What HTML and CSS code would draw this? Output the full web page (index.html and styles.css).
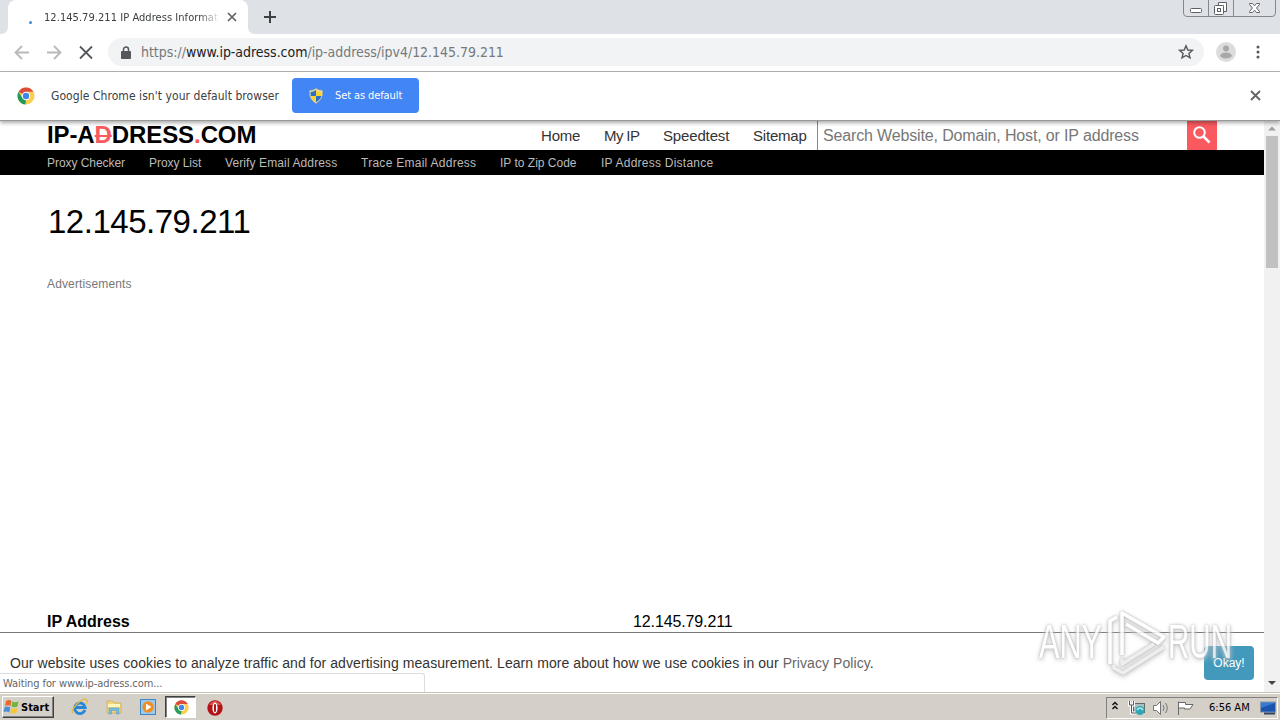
FILE: index.html
```html
<!DOCTYPE html>
<html lang="en">
<head>
<meta charset="utf-8">
<title>12.145.79.211 IP Address Information</title>
<link rel="stylesheet" href="styles.css">
</head>
<body>
<svg width="0" height="0" class="defs">
  <symbol id="chrome" viewBox="0 0 18 18">
    <circle cx="9" cy="9" r="8.500" fill="#fbcf4e"/>
    <path d="M9 9 1.600 4.700A8.500 8.500 0 0 1 16.400 4.800H9Z" fill="#dd4b3e"/>
    <path d="M1.600 4.800 5.300 11 9 13 8.400 17.500A8.500 8.500 0 0 1 1.600 4.800Z" fill="#229a5b"/>
    <circle cx="9" cy="9" r="4.200" fill="#fff"/><circle cx="9" cy="9" r="3.200" fill="#4285e8"/>
  </symbol>
</svg>
<div class="screen">
  <div class="tabstrip">
    <div class="edge"></div>
    <div class="tab">
      <i class="spinner"></i>
      <span class="tab-title"><span class="t-tab">12.145.79.211 IP Address Informati</span></span>
      <svg class="tab-close" width="10" height="10" viewBox="0 0 10 10"><path d="M1 1l8 8M9 1l-8 8" stroke="#5f6368" stroke-width="1.700"/></svg>
    </div>
    <svg class="newtab" width="36" height="34" viewBox="0 0 36 34"><path d="M0 27Q0 34 7 34H0Z" fill="#fff"/><path d="M22 11v12M16 17h12" stroke="#3c4043" stroke-width="2"/></svg>
    <svg class="winbtns" width="98" height="18" viewBox="0 0 98 18">
      <path d="M1.500 0V13Q1.500 16.500 5 16.500H90Q93.500 16.500 93.500 13V0M26.500 0V16M51.500 0V16" fill="none" stroke="#85888f"/>
      <rect x="8.500" y="8.500" width="11" height="4" rx="1" fill="#fff" stroke="#5d6066"/>
      <path d="M36.500 2.500H44.500V11.500H41.500V5.500H36.500Z" fill="#fff" stroke="#5d6066"/><rect x="32.500" y="5.500" width="9" height="9" rx="1" fill="#fff" stroke="#5d6066"/><rect x="35.500" y="8.500" width="3" height="3" fill="#fff" stroke="#5d6066"/>
      <path d="M67.500 3.500H70.500L72.500 5.800 74.500 3.500H77.500V4.500L74.500 8 77.500 11.500V12.500H74.500L72.500 10.200 70.500 12.500H67.500V11.500L70.500 8 67.500 4.500Z" fill="#fff" stroke="#5d6066"/>
    </svg>
  </div>

  <div class="toolbar">
    <svg width="96" height="37" viewBox="0 0 96 37" fill="none" stroke-width="1.800">
      <path d="M29 18.500H16M22 12 15.500 18.500 22 25M47 18.500H60M54 12 60.500 18.500 54 25" stroke="#b7b9bb"/>
      <path d="M80 12.500l12 12M92 12.500l-12 12" stroke="#54585c"/>
    </svg>
    <div class="omnibox">
      <svg width="10" height="13" viewBox="0 0 10 13"><rect x="0" y="5" width="10" height="8" rx="1" fill="#54585c"/><path d="M2.500 5.500V3.500a2.500 2.500 0 0 1 5 0v2" fill="none" stroke="#54585c" stroke-width="1.500"/></svg>
      <span class="url">https://<b>www.ip-adress.com</b>/ip-address/ipv4/12.145.79.211</span>
      <svg class="star" width="16" height="16" viewBox="0 0 16 16"><path d="M8 1.800 9.800 6l4.600.4-3.500 3 1.100 4.500L8 11.500l-4 2.400 1.100-4.500-3.500-3L6.200 6Z" fill="none" stroke="#54585c" stroke-width="1.400"/></svg>
    </div>
    <svg width="20" height="20" viewBox="0 0 20 20"><circle cx="10" cy="10" r="10" fill="#dcdcdc"/><circle cx="10" cy="6.500" r="3" fill="#a8a8a8"/><ellipse cx="10" cy="13.500" rx="5.800" ry="3" fill="#a8a8a8"/></svg>
    <svg class="dots" width="4" height="14" viewBox="0 0 4 14" fill="#54585c"><circle cx="2" cy="2" r="1.500"/><circle cx="2" cy="7" r="1.500"/><circle cx="2" cy="12" r="1.500"/></svg>
  </div>

  <div class="infobar">
    <svg width="18" height="18"><use href="#chrome"/></svg>
    <span class="info-text">Google Chrome isn't your default browser</span>
    <div class="default-btn">
      <svg width="16" height="16" viewBox="0 0 16 16"><path d="M8 .5Q11 2.500 14.500 2.500 15.500 11 8 15.500.5 11 1.500 2.500 5 2.500 8 .5Z" fill="#e8e2bb" stroke="#a9a68c" stroke-width=".6"/><path d="M8 2V8H2.700L2.500 4Q5.500 3.800 8 2ZM8 8H13.300Q12.300 12 8 14.300Z" fill="#2c6fc4"/><path d="M8 2Q10.500 3.800 13.500 4L13.300 8H8ZM8 8H2.700Q3.700 12 8 14.300Z" fill="#fbd22f"/></svg>
      <span>Set as default</span>
    </div>
    <svg class="info-close" width="11" height="11" viewBox="0 0 11 11"><path d="M1 1l9 9M10 1l-9 9" stroke="#666" stroke-width="1.900"/></svg>
  </div>

  <div class="view">
    <main class="page">
      <header class="head">
        <div class="logo">IP-A<s>D</s>DRESS<em>.</em>COM</div>
        <nav class="menu"><a class="m1">Home</a><a class="m2">My IP</a><a class="m3">Speedtest</a><a class="m4">Sitemap</a></nav>
        <div class="search"><span>Search Website, Domain, Host, or IP address</span></div>
        <div class="go"><svg width="30" height="29" viewBox="0 0 30 29"><circle cx="12.500" cy="11.500" r="5.300" fill="none" stroke="#fff" stroke-width="2"/><path d="M16.500 15.500l6 6" stroke="#fff" stroke-width="2.500"/></svg></div>
      </header>
      <nav class="subnav"><a class="s1">Proxy Checker</a><a class="s2">Proxy List</a><a class="s3">Verify Email Address</a><a class="s4">Trace Email Address</a><a class="s5">IP to Zip Code</a><a class="s6">IP Address Distance</a></nav>
      <h1>12.145.79.211</h1>
      <div class="ads"><span>Advertisements</span></div>
      <div class="row"><b>IP Address</b><span>12.145.79.211</span></div>
      <div class="cookie">
        <p>Our website uses cookies to analyze traffic and for advertising measurement. Learn more about how we use cookies in our <a>Privacy Policy</a>.</p>
        <div class="okay"><span>Okay!</span></div>
      </div>
    </main>
    <div class="scroll">
      <svg width="16" height="15" viewBox="0 0 16 15"><path d="M4 9.500 8 5.500l4 4Z" fill="#a0a0a0"/></svg>
      <i></i>
      <svg class="down" width="16" height="17" viewBox="0 0 16 17"><path d="M4 6 8 10l4-4Z" fill="#444"/></svg>
    </div>
    <div class="status"><span>Waiting for www.ip-adress.com...</span></div>
    <svg class="watermark" width="210" height="90" viewBox="0 0 210 90">
      <g fill="none" stroke-width="3.500" stroke-linejoin="round">
        <path d="M84 65V68L93 73 134 47M92 59V64L124 44" stroke="#ececec"/>
        <path d="M80 64V21L87 17M92 55V13L134 37 128 43 96 24" stroke="#fff"/>
      </g>
      <text x="9" y="58" textLength="63" lengthAdjust="spacingAndGlyphs">ANY</text><text x="138" y="58" textLength="64" lengthAdjust="spacingAndGlyphs">RUN</text>
    </svg>
  </div>

  <div class="taskbar">
    <div class="start"><svg width="17" height="16" viewBox="0 0 17 16"><path d="M3 2Q6 0 8.500 2L7.500 7Q5 5.500 2 7Z" fill="#e66a2c"/><path d="M9.500 2.500Q12 4 15.500 2.500L14.500 7.500Q11.500 9 8.500 7.500Z" fill="#72b43c"/><path d="M1.700 8Q4.500 6.700 7.300 8.500L6.300 13.500Q3.500 12 .5 13Z" fill="#498fd3"/><path d="M8.300 9Q11 10.500 14.300 9L13.300 14Q10 15 7.300 13.800Z" fill="#f6c633"/></svg><span>Start</span></div>
    <div class="launch">
      <svg width="18" height="18" viewBox="0 0 18 18"><path d="M14 12A5.300 5.300 0 1 1 14.200 9.500H5" fill="none" stroke="#2687d8" stroke-width="2.800"/><path d="M2 15Q-1 13 6 6T16 2Q17 3 15 6" fill="none" stroke="#e9b83b" stroke-width="1.200"/></svg>
      <svg width="18" height="18" viewBox="0 0 18 18"><path d="M2 3H8L9 5H16V15H2Z" fill="#f2d675" stroke="#c9ab50" stroke-width=".7"/><path d="M3 6H15V9H3Z" fill="#fff5be"/><path d="M4 16V10H14V16H11.500V12.500H6.500V16Z" fill="#74bfe3" stroke="#4a91bd" stroke-width=".5"/></svg>
      <svg width="18" height="18" viewBox="0 0 18 18"><rect x="1.500" y="1.500" width="15" height="15" fill="#9bc9ef" stroke="#3f86c4"/><circle cx="9" cy="9" r="5.700" fill="#f28c1b"/><path d="M7 5.500V12.500L12.500 9Z" fill="#fff"/></svg>
    </div>
    <div class="active"><svg width="15" height="15"><use href="#chrome"/></svg></div>
    <svg class="opera" width="16" height="16" viewBox="0 0 16 16"><circle cx="8" cy="8" r="7.700" fill="#b41217"/><path d="M2 5Q8-3 14 5" fill="#db5550"/><ellipse cx="8" cy="8" rx="2.600" ry="5.400" fill="#fff"/><rect x="7" y="4" width="2" height="8" rx="1" fill="#b41217"/></svg>
    <div class="tray">
      <svg width="82" height="20" viewBox="0 0 82 20">
        <path d="M5.500 7 8 4.500 10.500 7M5.500 11 8 8.500 10.500 11" fill="none" stroke="#111" stroke-width="1.500"/>
        <rect x="26.500" y="5.500" width="11" height="9" fill="#aebfc2" stroke="#62696b"/><path d="M22.500 3V7H26.500V3M24.500 7V15H29" fill="none" stroke="#fff" stroke-width="3"/><path d="M22.500 3V7H26.500V3M24.500 7V15H29" fill="none" stroke="#555"/><circle cx="33" cy="12.500" r="4.500" fill="#31a6b4"/><path d="M30 12Q33 8 36 12" fill="none" stroke="#a6eff1" stroke-width="1.500"/>
        <path d="M46.500 7.500H49.500L53.500 3.500V16.500L49.500 12.500H46.500Z" fill="#fff" stroke="#747474"/><path d="M56 7Q58 10 56 13M58.500 5Q62 10 58.500 15" fill="none" stroke="#777"/>
        <path d="M71.500 17V3.500M71.500 4.500H78.500V6.500H86L83 11H77.500V10H71.500" fill="#fff" stroke="#696969"/>
      </svg>
      <span class="clock">6:56 AM</span>
      <svg width="16" height="16" viewBox="0 0 16 16"><rect x=".5" y="2" width="15" height="10" fill="#3978d5" stroke="#8696aa"/><path d="M1 8 15 3V11.500H1Z" fill="#1b54ad"/><path d="M4 13.500H15" stroke="#30445f" stroke-width="2"/></svg>
    </div>
  </div>
</div>
</body>
</html>
```
FILE: styles.css
```css
*{box-sizing:border-box}
body{margin:0;overflow:hidden;font-family:"Liberation Sans",sans-serif;color:#000}
svg{display:block;flex:none;overflow:visible}
.defs{position:absolute}
.screen{width:1280px;height:720px;display:flex;flex-direction:column;background:#fff;white-space:nowrap}
.screen>*{flex:none}
.tabstrip,.toolbar,.infobar,.status,.taskbar{font-family:"DejaVu Sans Condensed","DejaVu Sans",sans-serif}
.tabstrip{height:34px;background:#dee1e6;display:flex}
.edge{width:8px;background:#dee1e6;border-bottom-right-radius:7px;box-shadow:0 8px 0 #fff}
.tab{width:240px;background:#fff;border-radius:8px 8px 0 0;display:flex;align-items:center;padding-left:21px}
.spinner{width:3px;height:3px;background:#3c8ad8;border-radius:2px;margin:10px 12px 0 0}
.tab-title{width:174px;font-size:11px;color:#3c4043;-webkit-mask-image:linear-gradient(90deg,#000 155px,transparent 176px)}
.t-tab{letter-spacing:.05px}
.tab-close{margin-left:9px}
.winbtns{margin-left:auto}
.toolbar{height:38px;border-bottom:1px solid #b5b5b5;display:flex;align-items:center;padding-bottom:1px}
.omnibox{width:1096px;height:28px;border-radius:14px;background:#f1f3f4;margin:0 12px;display:flex;align-items:center;padding:0 10px 0 13px}
.url{margin-left:10px;font-size:14px;line-height:18px;color:#75797d;letter-spacing:-.03px}
.url b{font-weight:400;color:#202124}
.star{margin-left:auto}
.dots{margin-left:20px}
.infobar{height:49px;border-bottom:1px solid #999;display:flex;align-items:center;padding:0 0 1px 17px;box-shadow:0 2px 4px #0005;z-index:2;position:relative;background:#fff}
.info-text{width:241px;margin-left:16px;font-size:12px;color:#3c4043;letter-spacing:.06px}
.default-btn{width:127px;height:35px;border-radius:4px;background:#4285f4;color:#fff;display:flex;align-items:center;padding-left:16px;gap:11px;font-size:11px;letter-spacing:-.1px}
.info-close{margin:0 19px 0 auto}
.view{height:571px;display:flex;position:relative}
.page{width:1264px;display:flex;flex-direction:column}
.head{height:29px;display:flex;align-items:center;padding-left:47px}
.logo{width:494px;font-size:24px;font-weight:700;line-height:28px;margin-top:-2px;letter-spacing:-.1px}
.logo s,.logo em{color:#f95a5f;font-style:normal;text-decoration-thickness:2px}
.menu{width:276px;display:flex;font-size:15px;color:#333;margin-top:-1px}
.m1{width:63px;letter-spacing:-.2px}
.m2{width:59px;letter-spacing:-.6px}
.m3{width:90px;letter-spacing:-.15px}
.m4{letter-spacing:-.2px}
.search{width:370px;height:29px;border-left:1px solid #888;padding:5px 0 0 5px;font-size:16px;line-height:20px;color:#777;letter-spacing:-.15px}
.go{width:30px;height:29px;background:#fa5a5f}
.subnav{height:25px;background:#000;color:#bbb;display:flex;padding-left:47px;font-size:12px;line-height:26px}
.s1{width:102px;letter-spacing:-.05px}
.s2{width:76px;letter-spacing:-.05px}
.s3{width:136px;letter-spacing:.11px}
.s4{width:139px;letter-spacing:.27px}
.s5{width:101px}
.s6{letter-spacing:.24px}
h1{margin:27px 0 0 48px;height:40px;font-size:33px;line-height:40px;font-weight:400;letter-spacing:-.48px}
.ads{height:366px;padding:34px 0 0 47px;font-size:12px;line-height:16px;color:#777;letter-spacing:.14px}
.row{height:24px;display:flex;padding-left:47px;font-size:16px;line-height:27px}
.row b{width:586px}
.row span{letter-spacing:-.12px}
.cookie{height:60px;border-top:1px solid #777;display:flex;align-items:flex-start;padding:13px 10px 0;justify-content:space-between;font-size:14px;color:#333}
.cookie p{margin:8px 0 0;line-height:18px;letter-spacing:.073px}
.cookie a{color:#666}
.okay{width:50px;height:34px;border-radius:4px;background:#4399bb;color:#fff;display:flex;align-items:center;justify-content:center;font-size:12px}
.scroll{width:16px;background:#f1f1f1;display:flex;flex-direction:column}
.scroll i{width:12px;height:132px;background:#c1c1c1;margin:0 2px}
.scroll .down{margin-top:auto}
.status{position:absolute;left:0;bottom:0;width:425px;height:19px;background:#fff;border:solid #ddd;border-width:1px 1px 0 0;border-top-right-radius:3px;font-size:11px;line-height:19px;padding-left:3px;color:#666;letter-spacing:-.09px}
.watermark{position:absolute;left:1030px;top:479px;opacity:.85;filter:drop-shadow(0 0 1.500px #aaa) drop-shadow(0 2px 2px #ccc)}
.watermark text{font:49px "Liberation Sans",sans-serif;fill:#fff}
.taskbar{height:28px;background:#d4d0c8;border-top:1px solid #c4c4bd;box-shadow:inset 0 1px #fff;display:flex;align-items:center}
.start{width:52px;height:22px;margin:1px 0 0 2px;border:1px solid;border-color:#fff #404040 #404040 #fff;box-shadow:inset -1px -1px #808080;display:flex;align-items:center;gap:1px;font-size:11px;font-weight:700}
.launch{display:flex;gap:16px;margin:1px 0 0 17px}
.active{width:31px;height:22px;background:#fff;border:1px solid;border-color:#404040 #fff #fff #404040;box-shadow:inset 1px 1px #808080;margin:1px 0 0 8px;display:flex;align-items:center;justify-content:center;padding-left:2px}
.opera{margin:2px 0 0 11px}
.tray{width:172px;height:22px;margin:2px 2px 0 auto;border:1px solid;border-color:#808080 #fff #fff #808080;display:flex;align-items:center}
.clock{width:51px;margin:0 0 0 20px;font-size:11px}
```
